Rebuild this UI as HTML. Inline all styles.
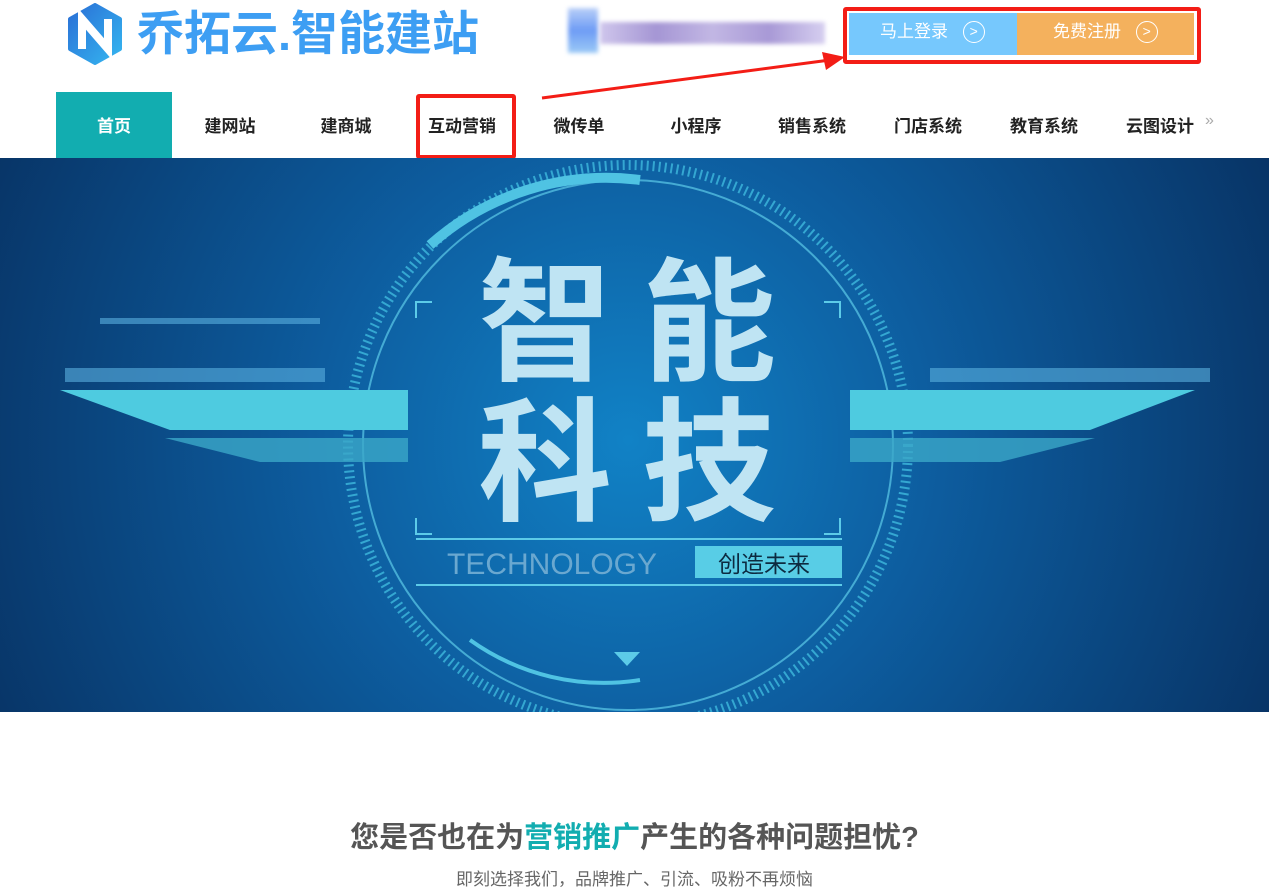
<!DOCTYPE html>
<html><head><meta charset="utf-8"><style>
*{margin:0;padding:0;box-sizing:border-box}
body{width:1269px;height:890px;background:#fff;font-family:"Liberation Sans","Noto Sans CJK SC",sans-serif;position:relative;overflow:hidden}
.abs{position:absolute}
.nav a{position:absolute;top:92px;height:66px;line-height:70px;font-size:17px;font-weight:bold;color:#222;text-align:center;width:116px}
</style></head><body>
<svg class="abs" style="left:64px;top:3px" width="62" height="62" viewBox="0 0 62 62">
<defs><linearGradient id="lg" x1="0" y1="0" x2="1" y2="1"><stop offset="0" stop-color="#2a6fd6"/><stop offset="1" stop-color="#35b6f0"/></linearGradient></defs>
<path d="M31 2 L56 16 L56 46 L31 60 L6 46 L6 16 Z" fill="url(#lg)" stroke="url(#lg)" stroke-width="4" stroke-linejoin="round"/>
<path d="M18 46 V16 L44 46 V16" fill="none" stroke="#fff" stroke-width="8"/>
</svg>
<div class="abs" style="left:137px;top:4px;font-size:47px;font-weight:bold;color:#3d9ef3;line-height:60px">乔拓云.智能建站</div>
<div class="abs" style="left:568px;top:8px;width:30px;height:45px;background:linear-gradient(#b9cff8,#6e9cf5,#9ccaf6);filter:blur(2px)"></div>
<div class="abs" style="left:600px;top:22px;width:225px;height:22px;background:linear-gradient(90deg,#cfc6ec,#a596d4,#c2b7e4,#a899d6,#d6cff0);filter:blur(2px)"></div>
<div class="abs" style="left:843px;top:7px;width:358px;height:57px;border:4px solid #f31d16;border-radius:3px"></div>
<div class="abs" style="left:849px;top:13px;width:168px;height:42px;background:#76c8fd;color:#fff;font-size:17px;line-height:38px;padding-left:31px">马上登录 <span style="display:inline-block;width:22px;height:22px;border:1.5px solid #fff;border-radius:50%;line-height:18px;text-align:center;font-size:14px;margin-left:10px;vertical-align:1px">&gt;</span></div>
<div class="abs" style="left:1017px;top:13px;width:177px;height:42px;background:#f4b15d;color:#fff;font-size:17px;line-height:38px;padding-left:36px">免费注册 <span style="display:inline-block;width:22px;height:22px;border:1.5px solid #fff;border-radius:50%;line-height:18px;text-align:center;font-size:14px;margin-left:10px;vertical-align:1px">&gt;</span></div>
<svg class="abs" style="left:540px;top:50px" width="310" height="52"><line x1="2" y1="48" x2="290" y2="10" stroke="#f31d16" stroke-width="3"/><polygon points="305,7 282,2 286,20" fill="#f31d16"/></svg>
<div class="nav">
<a style="left:56px;background:#12adb0;color:#fff">首页</a>
<a style="left:172px">建网站</a>
<a style="left:288px">建商城</a>
<a style="left:404px">互动营销</a>
<a style="left:521px">微传单</a>
<a style="left:638px">小程序</a>
<a style="left:754px">销售系统</a>
<a style="left:870px">门店系统</a>
<a style="left:986px">教育系统</a>
<a style="left:1102px">云图设计</a>
</div>
<div class="abs" style="left:1205px;top:112px;color:#aaa;font-size:16px">»</div>
<div class="abs" style="left:416px;top:94px;width:100px;height:65px;border:4px solid #f31d16;border-radius:3px"></div>
<svg class="abs" style="left:0;top:158px" width="1269" height="554" viewBox="0 158 1269 554">
<defs>
<radialGradient id="bg" cx="628" cy="440" r="700" gradientUnits="userSpaceOnUse"><stop offset="0" stop-color="#1182c6"/><stop offset="0.45" stop-color="#0d5c9e"/><stop offset="1" stop-color="#083466"/></radialGradient>
</defs>
<rect x="0" y="158" width="1269" height="554" fill="url(#bg)"/>
<circle cx="628" cy="445" r="280" fill="none" stroke="#3fb9dd" stroke-width="10" stroke-dasharray="2 4" opacity="0.8"/>
<circle cx="628" cy="445" r="265" fill="none" stroke="#5ccbe8" stroke-width="2" opacity="0.7"/>
<path d="M430 245 A265 265 0 0 1 640 180" fill="none" stroke="#4fc3e3" stroke-width="10"/>
<path d="M470 640 A230 230 0 0 0 640 680" fill="none" stroke="#4fc3e3" stroke-width="4"/>
<polygon points="60,390 408,390 408,430 170,430" fill="#4ecbe0"/>
<polygon points="165,438 408,438 408,462 260,462" fill="#3ba8c8" opacity="0.8"/>
<polygon points="850,390 1195,390 1090,430 850,430" fill="#4ecbe0"/>
<polygon points="850,438 1095,438 1000,462 850,462" fill="#3ba8c8" opacity="0.8"/>
<g fill="#5ab0e0" opacity="0.6"><rect x="65" y="368" width="260" height="14"/><rect x="100" y="318" width="220" height="6"/><rect x="930" y="368" width="280" height="14"/></g>
<g fill="none" stroke="#5ccbe8" stroke-width="2"><path d="M416 318 V302 H432"/><path d="M840 318 V302 H824"/><path d="M416 518 V534 H432"/><path d="M840 518 V534 H824"/></g>
<line x1="416" y1="539" x2="842" y2="539" stroke="#5ccbe8" stroke-width="2"/>
<line x1="416" y1="585" x2="842" y2="585" stroke="#5ccbe8" stroke-width="2"/>
<text x="447" y="574" font-family="Liberation Sans" font-size="30" fill="#6aa8d0">TECHNOLOGY</text>
<rect x="695" y="546" width="147" height="32" fill="#58cde6"/>
<text x="718" y="572" font-family="Noto Sans CJK SC" font-size="23" fill="#0c2a40">创造未来</text>
<g font-family="Noto Sans CJK SC" font-weight="bold" font-size="134" fill="#bfe4f3">
<text x="478" y="370">智</text><text x="642" y="370">能</text>
<text x="478" y="510">科</text><text x="642" y="510">技</text>
</g>
<polygon points="614,652 640,652 627,666" fill="#5ccbe8"/>
</svg>
<div class="abs" style="left:0;top:814px;width:1269px;text-align:center;font-size:29px;font-weight:bold;color:#555">您是否也在为<span style="color:#12adb0">营销推广</span>产生的各种问题担忧?</div>
<div class="abs" style="left:0;top:865px;width:1269px;text-align:center;font-size:17px;color:#666">即刻选择我们，品牌推广、引流、吸粉不再烦恼</div>
</body></html>
